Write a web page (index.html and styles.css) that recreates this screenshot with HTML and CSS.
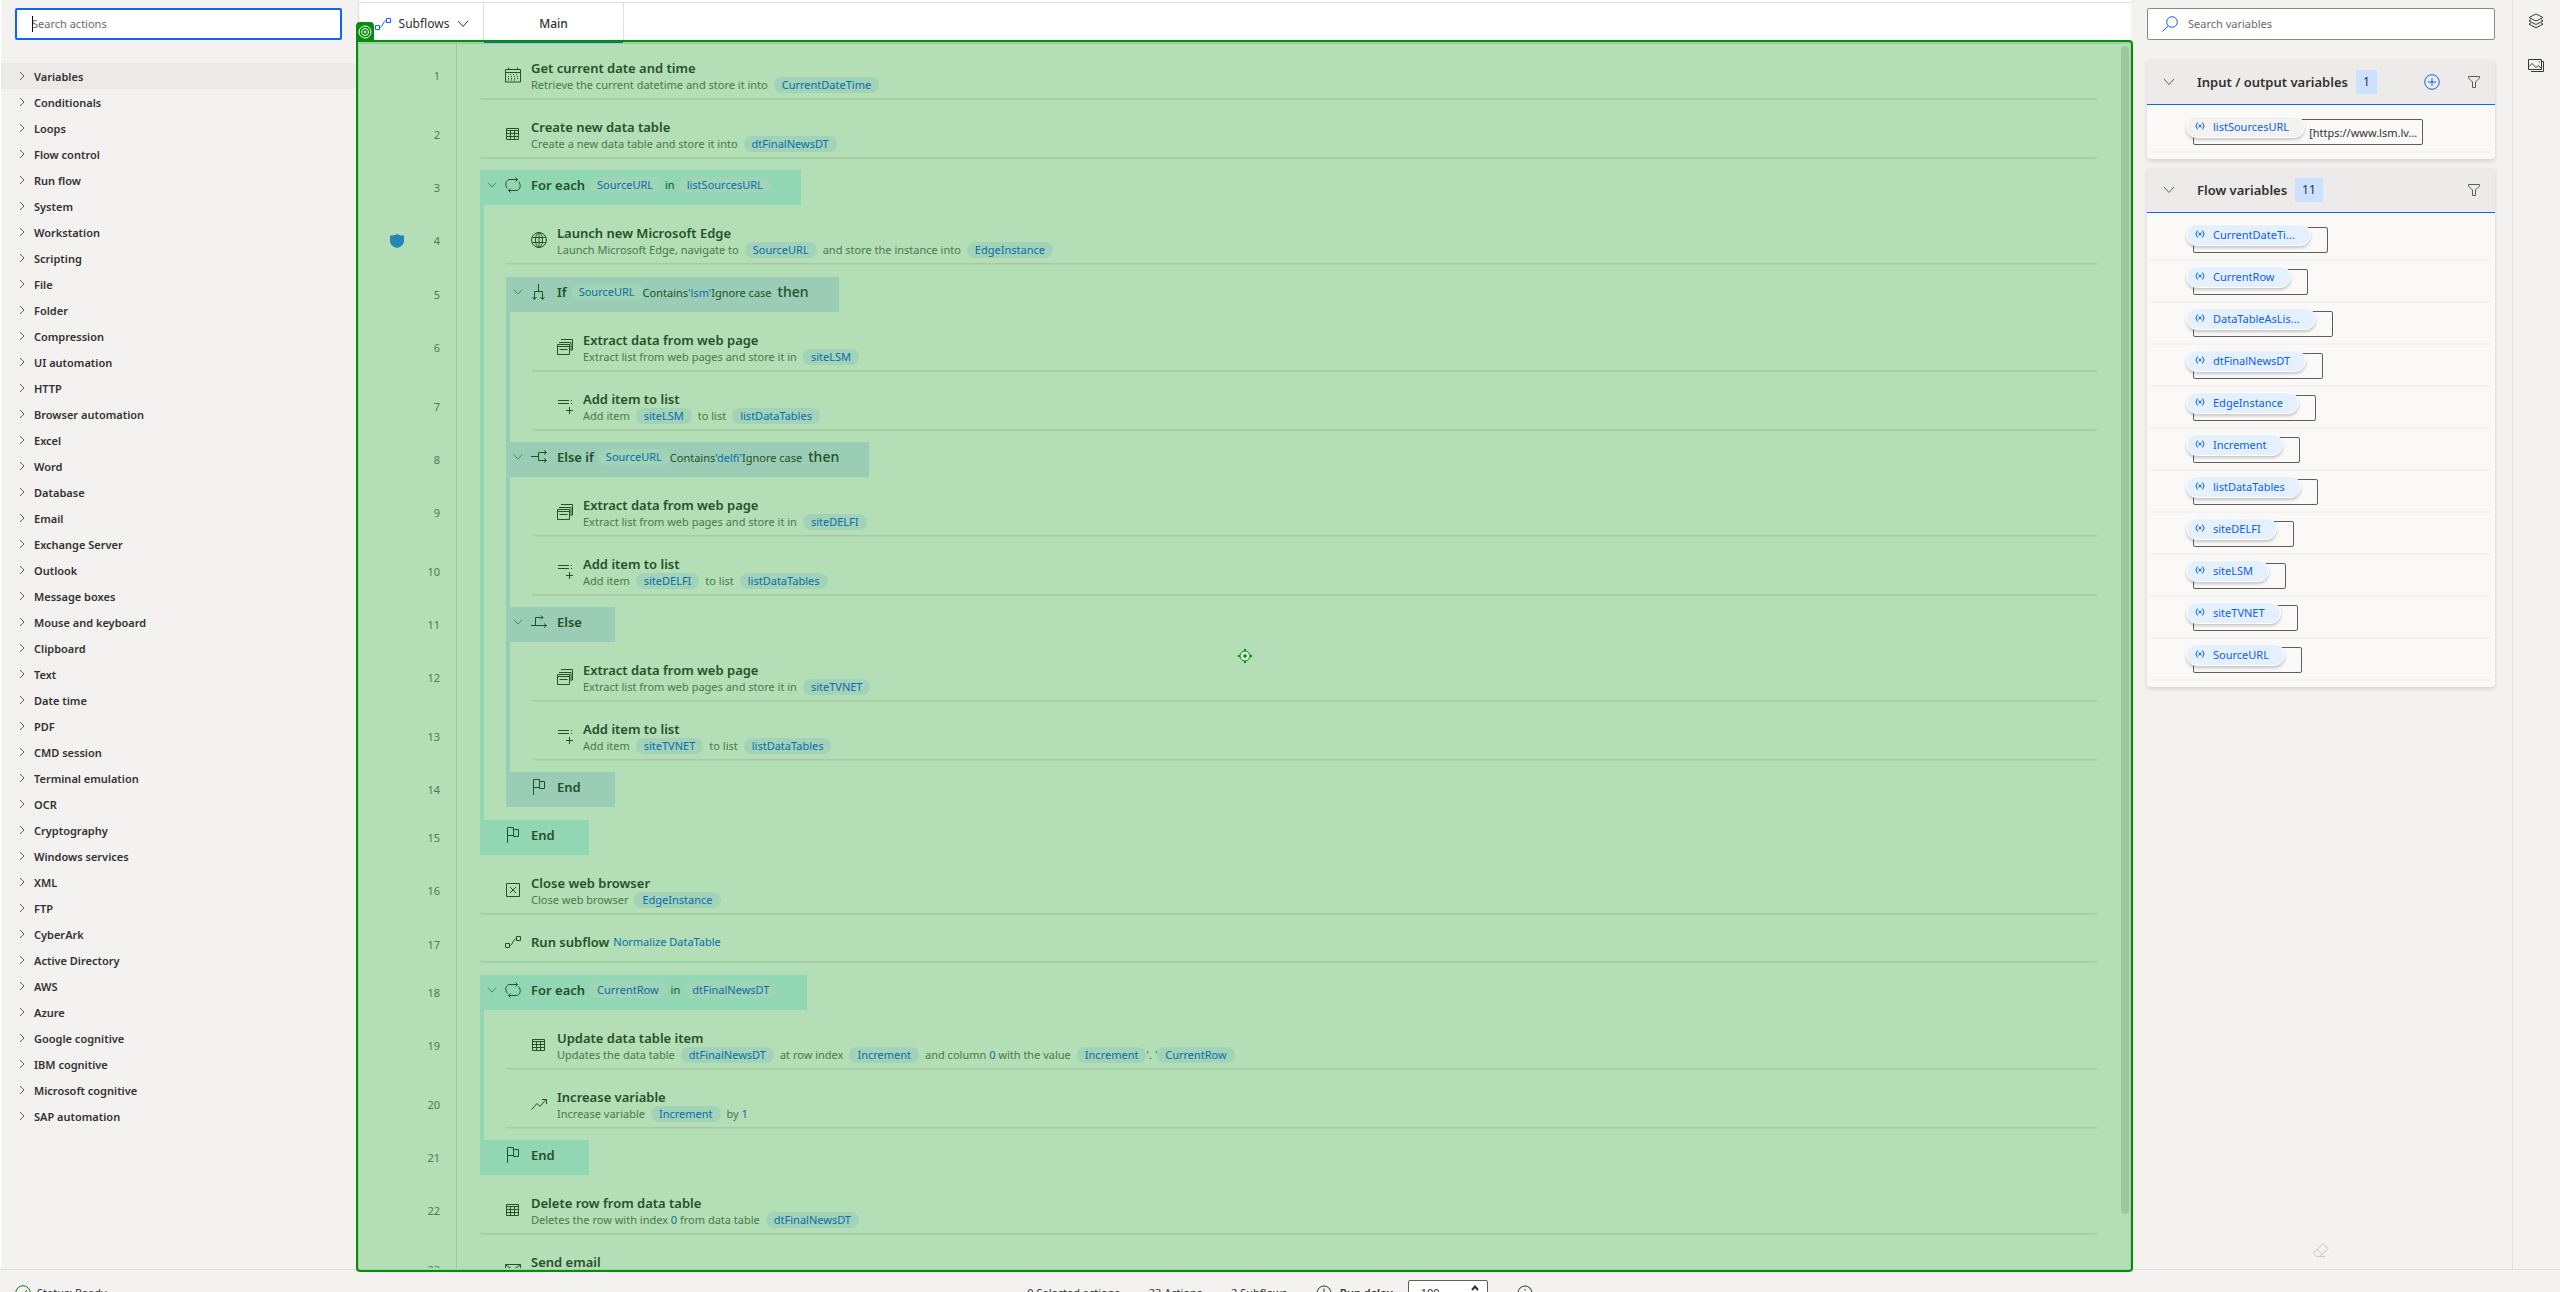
FILE: index.html
```
<!DOCTYPE html>
<html lang="en">
<head>
<meta charset="utf-8">
<title>Flow designer</title>
<link rel="stylesheet" href="styles.css">
</head>
<body>
<svg class="sprite" aria-hidden="true">
  <symbol id="right" viewBox="0 0 6 10"><path d="M1 1l4 4-4 4"/></symbol>
  <symbol id="down" viewBox="0 0 12 8"><path d="M1 1l5 5.5L11 1"/></symbol>
  <symbol id="flowlink" viewBox="0 0 16 14"><path d="M.5 8.500h4v4h-4zM11.500 1.500h4v4h-4zM4.500 10.500C8 10.500 8 3.500 11.500 3.500"/></symbol>
  <symbol id="calendar" viewBox="0 0 16 16"><path d="M.5 2.500h15v12.500H.5zM.5 5.500h15M3.500.5v2M12.500.5v2"/><path stroke-dasharray="1 2" d="M5 7.500h9M3 9.500h11M3 11.500h11M3 13h8"/></symbol>
  <symbol id="table" viewBox="0 0 16 16"><path d="M1.500 2.500h12v11h-12zM1.500 4.500h12M1.500 7.500h12M1.500 10.500h12M5.500 5v8M9.500 5v8"/></symbol>
  <symbol id="loop" viewBox="0 0 16 16"><path d="M2.500 11.500C-.5 8.500.5 2.500 5 2.500h7.500M10.500.5l2 2-2 2M13.500 4.500c3 3 2 9-2.500 9H3.500M5.500 11.500l-2 2 2 2"/></symbol>
  <symbol id="globe" viewBox="0 0 16 16"><circle cx="8" cy="8" r="7.500"/><ellipse cx="8" cy="8" rx="3.500" ry="7.500"/><path d="M8 .5v15M1.500 5.500h13M1.500 10.500h13"/></symbol>
  <symbol id="if" viewBox="0 0 16 16"><path d="M7.500 0v7.500M3.500 15V7.500h8V15M1.500 13l2 2.500 2-2.500M9.500 13l2 2.500 2-2.500"/></symbol>
  <symbol id="elseif" viewBox="0 0 16 16"><path d="M0 7.500h7M15 3.500H7.500v8H15M13 1.500l2.500 2-2.500 2M13 9.500l2.500 2-2.500 2"/></symbol>
  <symbol id="else" viewBox="0 0 16 16"><path d="M0 11.500h15M4.500 11.500v-8h7M10 1.500l2 2-2 2M13 9.500l2.500 2-2.500 2"/></symbol>
  <symbol id="extract" viewBox="0 0 16 16"><path d="M.5 5.500h12v10H.5zM.5 7.500h12M2.500 10.500h8M2 3.500h12v8.500M4 .5h11.500V11h-1"/></symbol>
  <symbol id="additem" viewBox="0 0 16 16"><path d="M1 2.500h11M1 5.500h11M14 2.500h1M14 5.500h1M12.500 9v7M9 12.500h7"/></symbol>
  <symbol id="flag" viewBox="0 0 16 16"><path d="M2.500 16V.5h6v8h-6M8.500 2.500h5v7h-5z"/></symbol>
  <symbol id="close" viewBox="0 0 16 16"><path d="M1.500 1.500h13v13h-13zM5 5l6 6M11 5l-6 6"/></symbol>
  <symbol id="trend" viewBox="0 0 16 16"><path d="M.5 13.500l5.500-6 3 3 6-7M11 3.500h4.500V8"/></symbol>
  <symbol id="mail" viewBox="0 0 16 16"><path d="M.5 3.500h15v10H.5zM.5 4l7.500 4.500L15.500 4"/></symbol>
  <symbol id="shield" viewBox="0 0 14 14"><path d="M7 0c2 1 4 1.500 7 1.500V7c0 3.500-3 6-7 7-4-1-7-3.500-7-7V1.500C3 1.500 5 1 7 0z"/></symbol>
  <symbol id="search" viewBox="0 0 16 16"><circle cx="10" cy="6" r="5.300"/><path d="M6.300 9.700L.5 15.500"/></symbol>
  <symbol id="plus" viewBox="0 0 16 16"><circle cx="8" cy="8" r="7.300"/><path d="M8 4v8M4 8h8"/></symbol>
  <symbol id="funnel" viewBox="0 0 12 12"><path d="M.5.5h11v1.500L7.500 6v5.500h-3V6L.5 2z"/></symbol>
  <symbol id="var" viewBox="0 0 10 8"><path d="M2.500.5Q-.5 4 2.500 7.500M7.500.5Q10.500 4 7.500 7.500M3.500 2.500l3 3M6.500 2.500l-3 3"/></symbol>
  <symbol id="layers" viewBox="0 0 16 16"><path d="M8 1l7 3.500L8 8 1 4.500zM3 6.500L1 8l7 3.500L15 8l-2-1.500M3 9.800l-2 1.400 7 3.500 7-3.500-2-1.400"/></symbol>
  <symbol id="images" viewBox="0 0 16 14"><path d="M.5.5h13v10H.5zM3 12.500h12.500V2.500h-2M1 7.500l3-3 4 4 2-2 3.500 3M11 3h1"/></symbol>
  <symbol id="eraser" viewBox="0 0 16 16"><path d="M10 1.500l5 5-8 8H4L1 11.500v-1zM4 7.500l5 5M4 14.500h8"/></symbol>
  <symbol id="check" viewBox="0 0 16 16"><circle cx="8" cy="8" r="7.300"/><path d="M4.500 8.500L7 11l5-6"/></symbol>
  <symbol id="clock" viewBox="0 0 16 16"><circle cx="8" cy="8" r="7"/><path d="M8 3.500V8h3"/></symbol>
  <symbol id="info" viewBox="0 0 16 16"><circle cx="8" cy="8" r="7"/><path d="M8 7v5M8 4v1.500"/></symbol>
  <symbol id="up" viewBox="0 0 8 6"><path d="M1 5l3-3.500L7 5"/></symbol>
  <symbol id="rings" viewBox="0 0 14 14"><circle cx="7" cy="7" r="6"/><circle cx="7" cy="7" r="3.500"/><circle cx="7" cy="7" r="1"/></symbol>
</svg>
<div class="app">
  <aside class="actions">
    <div class="search-actions"><span class="caret"></span><input type="text" placeholder="Search actions" aria-label="Search actions"></div>
    <ul class="groups">
      <li class="current"><svg><use href="#right"/></svg>Variables</li>
      <li><svg><use href="#right"/></svg>Conditionals</li>
      <li><svg><use href="#right"/></svg>Loops</li>
      <li><svg><use href="#right"/></svg>Flow control</li>
      <li><svg><use href="#right"/></svg>Run flow</li>
      <li><svg><use href="#right"/></svg>System</li>
      <li><svg><use href="#right"/></svg>Workstation</li>
      <li><svg><use href="#right"/></svg>Scripting</li>
      <li><svg><use href="#right"/></svg>File</li>
      <li><svg><use href="#right"/></svg>Folder</li>
      <li><svg><use href="#right"/></svg>Compression</li>
      <li><svg><use href="#right"/></svg>UI automation</li>
      <li><svg><use href="#right"/></svg>HTTP</li>
      <li><svg><use href="#right"/></svg>Browser automation</li>
      <li><svg><use href="#right"/></svg>Excel</li>
      <li><svg><use href="#right"/></svg>Word</li>
      <li><svg><use href="#right"/></svg>Database</li>
      <li><svg><use href="#right"/></svg>Email</li>
      <li><svg><use href="#right"/></svg>Exchange Server</li>
      <li><svg><use href="#right"/></svg>Outlook</li>
      <li><svg><use href="#right"/></svg>Message boxes</li>
      <li><svg><use href="#right"/></svg>Mouse and keyboard</li>
      <li><svg><use href="#right"/></svg>Clipboard</li>
      <li><svg><use href="#right"/></svg>Text</li>
      <li><svg><use href="#right"/></svg>Date time</li>
      <li><svg><use href="#right"/></svg>PDF</li>
      <li><svg><use href="#right"/></svg>CMD session</li>
      <li><svg><use href="#right"/></svg>Terminal emulation</li>
      <li><svg><use href="#right"/></svg>OCR</li>
      <li><svg><use href="#right"/></svg>Cryptography</li>
      <li><svg><use href="#right"/></svg>Windows services</li>
      <li><svg><use href="#right"/></svg>XML</li>
      <li><svg><use href="#right"/></svg>FTP</li>
      <li><svg><use href="#right"/></svg>CyberArk</li>
      <li><svg><use href="#right"/></svg>Active Directory</li>
      <li><svg><use href="#right"/></svg>AWS</li>
      <li><svg><use href="#right"/></svg>Azure</li>
      <li><svg><use href="#right"/></svg>Google cognitive</li>
      <li><svg><use href="#right"/></svg>IBM cognitive</li>
      <li><svg><use href="#right"/></svg>Microsoft cognitive</li>
      <li><svg><use href="#right"/></svg>SAP automation</li>
    </ul>
  </aside>

  <main class="designer">
    <div class="tabs">
      <button class="tab subflows" type="button"><svg class="flowlink"><use href="#flowlink"/></svg>Subflows<svg class="tab-down"><use href="#down"/></svg></button>
      <button class="tab main-tab" type="button">Main</button>
    </div>
    <div class="canvas">
      <span class="badge"><svg><use href="#rings"/></svg></span>
      <div class="tab-line"><span></span></div>
      <svg class="target" viewBox="0 0 14 14"><circle cx="7" cy="7" r="5"/><path d="M7 0v2M7 12v2M0 7h2M12 7h2"/><circle class="dot" cx="7" cy="7" r="1.800"/></svg>
      <span class="scrollbar"></span>
      <div class="viewport">
      <ol class="flow">
        <li class="row action"><span class="gutter">1</span><div class="card"><svg><use href="#calendar"/></svg><div><h3>Get current date and time</h3><p>Retrieve the current datetime and store it into<b>CurrentDateTime</b></p></div></div></li>
        <li class="row action"><span class="gutter">2</span><div class="card"><svg><use href="#table"/></svg><div><h3>Create new data table</h3><p>Create a new data table and store it into<b>dtFinalNewsDT</b></p></div></div></li>
        <li class="row block loop"><span class="gutter">3</span><div class="rail"><div class="head"><button type="button" aria-label="Collapse"><svg><use href="#down"/></svg></button><svg><use href="#loop"/></svg><h3>For each</h3><p><b>SourceURL</b>in<b>listSourcesURL</b></p></div></div></li>
        <li class="row action"><span class="gutter"><svg class="shield"><use href="#shield"/></svg>4</span><i class="guide loop"></i><div class="card"><svg><use href="#globe"/></svg><div><h3>Launch new Microsoft Edge</h3><p>Launch Microsoft Edge, navigate to<b>SourceURL</b>and store the instance into<b>EdgeInstance</b></p></div></div></li>
        <li class="row block cond"><span class="gutter">5</span><i class="guide loop"></i><div class="rail"><div class="head"><button type="button" aria-label="Collapse"><svg><use href="#down"/></svg></button><svg><use href="#if"/></svg><h3>If</h3><p><b>SourceURL</b></p><span class="test">Contains<em>'lsm'</em>Ignore case</span><strong>then</strong></div></div></li>
        <li class="row action"><span class="gutter">6</span><i class="guide loop"></i><i class="guide cond"></i><div class="card"><svg><use href="#extract"/></svg><div><h3>Extract data from web page</h3><p>Extract list from web pages and store it in<b>siteLSM</b></p></div></div></li>
        <li class="row action"><span class="gutter">7</span><i class="guide loop"></i><i class="guide cond"></i><div class="card"><svg><use href="#additem"/></svg><div><h3>Add item to list</h3><p>Add item<b>siteLSM</b>to list<b>listDataTables</b></p></div></div></li>
        <li class="row block cond"><span class="gutter">8</span><i class="guide loop"></i><div class="rail"><div class="head"><button type="button" aria-label="Collapse"><svg><use href="#down"/></svg></button><svg><use href="#elseif"/></svg><h3>Else if</h3><p><b>SourceURL</b></p><span class="test">Contains<em>'delfi'</em>Ignore case</span><strong>then</strong></div></div></li>
        <li class="row action"><span class="gutter">9</span><i class="guide loop"></i><i class="guide cond"></i><div class="card"><svg><use href="#extract"/></svg><div><h3>Extract data from web page</h3><p>Extract list from web pages and store it in<b>siteDELFI</b></p></div></div></li>
        <li class="row action"><span class="gutter">10</span><i class="guide loop"></i><i class="guide cond"></i><div class="card"><svg><use href="#additem"/></svg><div><h3>Add item to list</h3><p>Add item<b>siteDELFI</b>to list<b>listDataTables</b></p></div></div></li>
        <li class="row block cond"><span class="gutter">11</span><i class="guide loop"></i><div class="rail"><div class="head"><button type="button" aria-label="Collapse"><svg><use href="#down"/></svg></button><svg><use href="#else"/></svg><h3>Else</h3></div></div></li>
        <li class="row action"><span class="gutter">12</span><i class="guide loop"></i><i class="guide cond"></i><div class="card"><svg><use href="#extract"/></svg><div><h3>Extract data from web page</h3><p>Extract list from web pages and store it in<b>siteTVNET</b></p></div></div></li>
        <li class="row action"><span class="gutter">13</span><i class="guide loop"></i><i class="guide cond"></i><div class="card"><svg><use href="#additem"/></svg><div><h3>Add item to list</h3><p>Add item<b>siteTVNET</b>to list<b>listDataTables</b></p></div></div></li>
        <li class="row block cond end"><span class="gutter">14</span><i class="guide loop"></i><div class="rail"><div class="head"><svg><use href="#flag"/></svg><h3>End</h3></div></div></li>
        <li class="row block loop end"><span class="gutter">15</span><div class="rail"><div class="head"><svg><use href="#flag"/></svg><h3>End</h3></div></div></li>
        <li class="row action"><span class="gutter">16</span><div class="card"><svg><use href="#close"/></svg><div><h3>Close web browser</h3><p>Close web browser<b>EdgeInstance</b></p></div></div></li>
        <li class="row single"><span class="gutter">17</span><div class="card"><svg class="flowlink"><use href="#flowlink"/></svg><h3>Run subflow</h3><a href="#">Normalize DataTable</a></div></li>
        <li class="row block loop"><span class="gutter">18</span><div class="rail"><div class="head"><button type="button" aria-label="Collapse"><svg><use href="#down"/></svg></button><svg><use href="#loop"/></svg><h3>For each</h3><p><b>CurrentRow</b>in<b>dtFinalNewsDT</b></p></div></div></li>
        <li class="row action"><span class="gutter">19</span><i class="guide loop"></i><div class="card"><svg><use href="#table"/></svg><div><h3>Update data table item</h3><p>Updates the data table<b>dtFinalNewsDT</b>at row index<b>Increment</b><span>and column <em>0</em> with the value</span><span><b>Increment</b><em>'. '</em><b>CurrentRow</b></span></p></div></div></li>
        <li class="row action"><span class="gutter">20</span><i class="guide loop"></i><div class="card"><svg><use href="#trend"/></svg><div><h3>Increase variable</h3><p>Increase variable<b>Increment</b><span>by <em>1</em></span></p></div></div></li>
        <li class="row block loop end"><span class="gutter">21</span><div class="rail"><div class="head"><svg><use href="#flag"/></svg><h3>End</h3></div></div></li>
        <li class="row action"><span class="gutter">22</span><div class="card"><svg><use href="#table"/></svg><div><h3>Delete row from data table</h3><p><span>Deletes the row with index <em>0</em> from data table</span><b>dtFinalNewsDT</b></p></div></div></li>
        <li class="row action"><span class="gutter">23</span><div class="card"><svg><use href="#mail"/></svg><div><h3>Send email</h3></div></div></li>
      </ol>
      </div>
    </div>
  </main>

  <aside class="variables">
    <label class="search-vars"><svg><use href="#search"/></svg><input type="text" placeholder="Search variables" aria-label="Search variables"></label>
    <section class="panel">
      <header><svg class="fold"><use href="#down"/></svg><h2>Input / output variables</h2><span class="count">1</span><button class="add" type="button" aria-label="Add variable"><svg><use href="#plus"/></svg></button><button class="filter" type="button" aria-label="Filter"><svg><use href="#funnel"/></svg></button></header>
      <ul><li><div class="box"><span class="chip plain"><svg><use href="#var"/></svg>listSourcesURL</span><span class="value">[https://www.lsm.lv...</span></div></li></ul>
    </section>
    <section class="panel">
      <header><svg class="fold"><use href="#down"/></svg><h2>Flow variables</h2><span class="count">11</span><button class="filter" type="button" aria-label="Filter"><svg><use href="#funnel"/></svg></button></header>
      <ul>
        <li><div class="box"><span class="chip"><svg><use href="#var"/></svg>CurrentDateTi...</span></div></li>
        <li><div class="box"><span class="chip"><svg><use href="#var"/></svg>CurrentRow</span></div></li>
        <li><div class="box"><span class="chip"><svg><use href="#var"/></svg>DataTableAsLis...</span></div></li>
        <li><div class="box"><span class="chip"><svg><use href="#var"/></svg>dtFinalNewsDT</span></div></li>
        <li><div class="box"><span class="chip"><svg><use href="#var"/></svg>EdgeInstance</span></div></li>
        <li><div class="box"><span class="chip"><svg><use href="#var"/></svg>Increment</span></div></li>
        <li><div class="box"><span class="chip"><svg><use href="#var"/></svg>listDataTables</span></div></li>
        <li><div class="box"><span class="chip"><svg><use href="#var"/></svg>siteDELFI</span></div></li>
        <li><div class="box"><span class="chip"><svg><use href="#var"/></svg>siteLSM</span></div></li>
        <li><div class="box"><span class="chip"><svg><use href="#var"/></svg>siteTVNET</span></div></li>
        <li><div class="box"><span class="chip"><svg><use href="#var"/></svg>SourceURL</span></div></li>
      </ul>
    </section>
    <button class="eraser" type="button" aria-label="Clear values"><svg><use href="#eraser"/></svg></button>
  </aside>

  <nav class="siderail" aria-label="Panes">
    <button type="button" aria-label="UI elements"><svg><use href="#layers"/></svg></button>
    <button type="button" aria-label="Images"><svg><use href="#images"/></svg></button>
  </nav>

  <footer class="status">
    <div class="state"><svg class="ok"><use href="#check"/></svg>Status: Ready</div>
    <div class="stats">
      <span>0 Selected actions</span><span>23 Actions</span><span>2 Subflows</span>
      <label class="delay" for="delay"><svg><use href="#clock"/></svg>Run delay</label>
      <span class="spin"><input id="delay" type="text" value="100"><svg><use href="#up"/></svg></span>
      <svg><use href="#info"/></svg>
    </div>
  </footer>
</div>
</body>
</html>
```
FILE: styles.css
```
* { box-sizing: border-box; }
body, h2, h3, p, ul, ol { margin: 0; padding: 0; }
ul, ol { list-style: none; }
body {
  height: 100vh;
  overflow: hidden;
  background: #f3f2f1;
  color: #323130;
  font: 11px/16px "Noto Sans", "Open Sans", sans-serif;
}
svg { display: block; flex: none; width: 16px; height: 16px; fill: none; stroke: currentColor; stroke-width: 1; }
.sprite { position: absolute; width: 0; height: 0; }
button { margin: 0; padding: 0; border: 0; background: none; color: inherit; font: inherit; }
input { min-width: 0; margin: 0; padding: 0; border: 0; outline: 0; background: none; color: inherit; font: inherit; }
input::placeholder { color: #6b6967; opacity: 1; }
b, em, strong { font-weight: 400; font-style: normal; }

.app {
  display: grid;
  grid-template: minmax(0, 1fr) 23px / 356px minmax(0, 1fr) 379px 48px;
  height: 100vh;
}

/* actions pane */
.actions { padding-top: 8px; border-left: 1px solid #fff; }
.search-actions {
  display: flex;
  align-items: center;
  height: 32px;
  margin: 0 14px 23px;
  padding: 0 15px;
  border: 2px solid #0f62fe;
  border-radius: 2px;
  background: #fff;
}
.search-actions input { flex: 1; }
.caret { width: 1px; height: 16px; margin-right: -1px; background: #000; }
.groups li { display: flex; align-items: center; gap: 9px; height: 26px; padding: 1px 0 0 18px; font-weight: 600; }
.groups .current { background: #ebeae9; }
.groups svg { width: 6px; height: 10px; margin-bottom: 2px; color: #605e5c; }

/* designer */
.designer { display: flex; flex-direction: column; min-height: 0; }
.tabs {
  display: flex;
  height: 40px;
  margin: 0 2px;
  padding-top: 2px;
  border-left: 1px solid #e1dfdd;
  background: linear-gradient(#fff 2px, #e1dfdd 2px, #e1dfdd 3px, #fff 3px);
}
.tab { display: flex; align-items: center; justify-content: center; padding-top: 6px; border-right: 1px solid #e1dfdd; font-size: 12px; }
.subflows { width: 125px; gap: 8px; padding-left: 2px; }
.main-tab { width: 140px; font-weight: 500; }
.subflows .flowlink { height: 14px; color: #0f62fe; }
.tab-down { width: 12px; height: 8px; }

.canvas {
  position: relative;
  z-index: 1;
  display: flex;
  flex: 1;
  flex-direction: column;
  min-height: 0;
  margin-bottom: -3px;
  padding-bottom: 2px;
  border: 2px solid #058d0b;
  border-radius: 0 4px 4px 4px;
  background: #b4deb5;
  box-shadow: inset 0 0 0 1px #a3cda5;
  color: #24512a;
}
.badge {
  position: absolute;
  top: -20px;
  left: -2px;
  display: grid;
  place-items: center;
  width: 18px;
  height: 19px;
  border-radius: 4px 4px 0 0;
  background: #058d0b;
  color: #fff;
}
.badge svg { width: 14px; height: 14px; }
.tab-line { flex: none; height: 2px; padding-left: 126px; border-bottom: 1px solid #a0c8a2; }
.tab-line span { display: block; width: 139px; height: 1px; background: #0a6cab; }
.target { position: absolute; top: 50%; left: 50%; width: 14px; height: 14px; margin: -7px; color: #058d0b; stroke-width: 2; }
.target circle { fill: #d5eed6; stroke-width: 1; }
.target .dot { fill: #058d0b; stroke: none; }
.scrollbar { position: absolute; top: 4px; right: 2px; bottom: 56px; width: 8px; border-radius: 4px; background: #9fc79f; }
.viewport { flex: 1; min-height: 0; overflow: hidden; }
.flow { margin-left: 98px; padding: 9px 33px 0 23px; border-left: 1px solid #9dc69f; }

.row { display: flex; height: 48px; }
.row.action { height: 59px; }
.row.action + .row.action { height: 58px; }
.gutter {
  display: flex;
  align-items: center;
  justify-content: flex-end;
  width: 122px;
  height: 35px;
  margin-left: -122px;
  padding-right: 40px;
  color: #4c7b4f;
  font-size: 11px;
}
.action .gutter { height: 46px; }
.shield { width: 14px; height: 14px; margin-right: auto; margin-left: 32px; stroke: none; fill: #2584b8; }
.guide { flex: none; width: 26px; border-left: 4px solid; }
.guide.loop, .loop .rail { border-color: #92d7b3; }
.guide.cond, .cond .rail { border-color: #9bccb5; }
.loop .head { background: #92d7b3; }
.cond .head { background: #9bccb5; }

.card {
  display: flex;
  flex: 1;
  align-items: center;
  gap: 10px;
  height: 46px;
  padding: 0 0 2px 25px;
  border-bottom: 1px solid #a2cca4;
  border-radius: 2px;
  box-shadow: 0 1px 1px #a9d2aa;
}
.card > div { align-self: flex-start; padding-top: 7px; }
.single .card { height: 35px; padding-bottom: 4px; }
.single .flowlink { height: 14px; }
.single a { margin-left: -6px; color: #0a6cab; text-decoration: none; }
h3 { font-size: 13px; font-weight: 600; line-height: 16px; }
p { display: flex; align-items: center; gap: 6px; height: 18px; color: #477a4a; white-space: pre; }
p span { display: flex; align-items: center; }
em { color: #0a6cab; }
p b { height: 16px; padding: 0 8px; border-radius: 8px; background: #a2d3b8; color: #0a6cab; line-height: 15px; }

.rail { padding-bottom: 13px; border-left: 4px solid; }
.end .rail { height: 35px; padding: 0; }
.head { display: flex; align-items: center; min-width: 105px; height: 35px; padding: 0 30px 5px 3px; }
.head button { width: 10px; margin-right: 8px; }
.head button svg { width: 10px; height: 8px; color: #477a4a; }
.head > svg { margin-right: 10px; }
.end .head { width: 105px; padding-left: 21px; }
.head p { gap: 4px; margin-left: 4px; color: #24512a; }
.head p b { background: #a0d4b6; }
.test { padding-top: 2px; white-space: pre; }
.head strong { margin-left: 6px; font-size: 14px; font-weight: 500; }

/* variables pane */
.variables { display: flex; flex-direction: column; padding: 8px 17px 9px 14px; }
.search-vars { display: flex; align-items: center; gap: 10px; height: 32px; margin-bottom: 20px; padding: 0 14px; border: 1px solid #8a8886; border-radius: 2px; background: #fff; }
.search-vars svg { color: #0f62fe; }
.search-vars input { flex: 1; }
.panel { margin-bottom: 9px; border-radius: 4px; background: #faf9f8; box-shadow: 0 2px 4px #0002; }
.panel header { display: flex; align-items: center; height: 45px; padding: 0 15px 0 16px; border-bottom: 1px solid #0f62fe; border-radius: 4px 4px 0 0; background: #ecebea; }
.panel h2 { margin: 0 8px 0 22px; font-size: 13px; font-weight: 600; line-height: 16px; }
.fold { width: 12px; height: 8px; color: #605e5c; }
.count { min-width: 21px; padding: 0 7px; background: #cce0ff; font-size: 12px; line-height: 24px; text-align: center; }
.add { margin-left: auto; margin-right: 28px; color: #0f62fe; }
.filter { color: #605e5c; }
.count + .filter { margin-left: auto; }
.filter svg { width: 12px; height: 12px; }
.panel ul { padding: 6px 4px; }
.panel li { display: flex; height: 42px; padding: 8px 0 0 42px; border-bottom: 2px solid #f3f2f1; }
.box { display: flex; height: 26px; padding-right: 16px; border: 1px solid #605e5c; border-radius: 2px; }
.chip { display: flex; align-items: center; gap: 8px; height: 22px; margin: -4px 0 0 -8px; padding: 0 15px 0 8px; border: 1px solid #fff; border-radius: 11px; background: #e5f0ff; box-shadow: 0 2px 3px #0003; color: #0b5fec; }
.chip.plain { background: #f3f2f1; }
.chip svg { width: 10px; height: 8px; margin-bottom: 2px; }
.value { margin: 5px -11px 0 4px; }
.eraser { align-self: center; margin-top: auto; margin-right: 1px; padding-bottom: 2px; color: #c8c6c4; }

.siderail { display: flex; flex-direction: column; align-items: center; gap: 29px; padding: 13px 1px 0 0; border-left: 1px solid #e1dfdd; color: #3b3a39; }

/* status bar, taller than the space left for it */
.status { grid-column: 1 / -1; display: grid; grid-template-columns: 1fr auto 1fr; align-items: start; height: 48px; border-top: 1px solid #e1dfdd; }
.state { display: flex; align-items: center; gap: 6px; height: 46px; padding-left: 15px; }
.ok { color: #107c10; }
.stats { display: flex; align-items: center; gap: 29px; height: 46px; }
.delay { display: flex; align-items: center; gap: 8px; font-weight: 600; }
.spin { display: flex; align-items: center; width: 80px; height: 26px; margin-left: -14px; padding: 0 8px 0 12px; border: 1px solid #605e5c; border-radius: 2px; background: #fff; }
.spin input { flex: 1; }
.spin svg { width: 8px; height: 6px; margin-bottom: 10px; stroke-width: 2; }
```
